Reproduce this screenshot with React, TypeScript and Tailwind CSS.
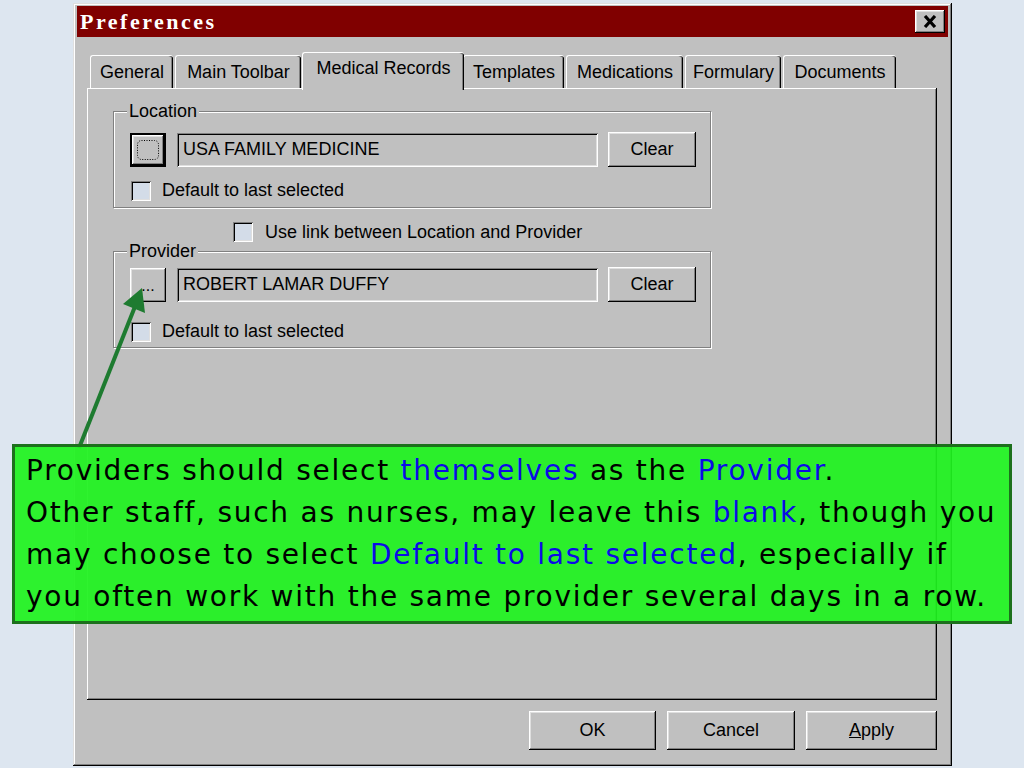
import { Fragment } from 'react';

const raised =
  'bg-[#c0c0c0] shadow-[inset_-1px_-1px_0_#000,inset_1px_1px_0_#fff,inset_-2px_-2px_0_#808080,inset_2px_2px_0_#dfdfdf]';
const sunken =
  'shadow-[inset_1px_1px_0_#808080,inset_-1px_-1px_0_#fff,inset_2px_2px_0_#000,inset_-2px_-2px_0_#dfdfdf]';

const tabs = [
  { label: 'General', w: 'w-[83px]' },
  { label: 'Main Toolbar', w: 'w-[126px]' },
  { label: 'Medical Records', w: 'w-[162px]', active: true },
  { label: 'Templates', w: 'w-[101px]' },
  { label: 'Medications', w: 'w-[117px]' },
  { label: 'Formulary', w: 'w-[96px]' },
  { label: 'Documents', w: 'w-[113px]' },
];

function Checkbox() {
  return <div className={`w-[20px] h-[20px] bg-[#d3dce8] ${sunken}`} />;
}

function Field({ value }: { value: string }) {
  return (
    <div className={`w-[421px] h-[34px] flex items-center pl-[6px] bg-[#c0c0c0] ${sunken}`}>
      {value}
    </div>
  );
}

function ClearButton() {
  return (
    <div className={`w-[88px] h-[35px] flex items-center justify-center ml-[10px] ${raised}`}>Clear</div>
  );
}

function GroupBox({ title, children }: { title: string; children: React.ReactNode }) {
  return (
    <div className="relative w-[598px] h-[97px] border border-[#808080] shadow-[1px_1px_0_#fff,inset_1px_1px_0_#fff] pl-[16px] pt-[20px]">
      <span className="absolute left-[13px] top-[-11px] px-[2px] leading-[20px] bg-[#c0c0c0]">{title}</span>
      {children}
    </div>
  );
}

const callout: [string, boolean][][] = [
  [['Providers should select ', false], ['themselves', true], [' as the ', false], ['Provider', true], ['.', false]],
  [['Other staff, such as nurses, may leave this ', false], ['blank', true], [', though you', false]],
  [['may choose to select ', false], ['Default to last selected', true], [', especially if', false]],
  [['you often work with the same provider several days in a row.', false]],
];

export default function App() {
  return (
    <div className="relative w-[1024px] h-[768px] overflow-hidden bg-[#dde6f0] font-['Liberation_Sans',Arial,sans-serif] text-[18px] text-black pt-[3px]">
      {/* dialog */}
      <div className="ml-[73px] w-[879px] h-[763px] bg-[#c0c0c0] shadow-[inset_-1px_-1px_0_#000,inset_1px_1px_0_#dfdfdf,inset_-2px_-2px_0_#808080,inset_2px_2px_0_#fff] px-[4px] pt-[3px] flex flex-col">
        <div className="h-[31px] bg-[#800000] flex items-center justify-between pl-[3px] pr-[3px]">
          <span className="font-['Liberation_Serif',serif] font-bold text-white text-[22px] tracking-[2.5px]">Preferences</span>
          <div className={`w-[30px] h-[23px] flex items-center justify-center ${raised}`}>
            <svg width="14" height="13" viewBox="0 0 14 13">
              <path d="M2 1 L12 12 M12 1 L2 12" stroke="#000" strokeWidth="3.2" />
            </svg>
          </div>
        </div>

        {/* tabs */}
        <div className="ml-[10px] mt-[15px] w-[850px]">
          <div className="flex items-start h-[36px] pl-[3px]">
            {tabs.map(t =>
              t.active ? (
                <div
                  key={t.label}
                  className={`${t.w} relative z-10 h-[38px] -mx-[1px] bg-[#c0c0c0] rounded-t-[3px] border-t border-l border-white shadow-[inset_-1px_0_0_#000,inset_-2px_0_0_#808080] flex items-center justify-center pb-[6px]`}
                >
                  {t.label}
                </div>
              ) : (
                <div
                  key={t.label}
                  className={`${t.w} mt-[3px] h-[33px] rounded-t-[3px] border-t border-l border-white shadow-[inset_-1px_0_0_#000,inset_-2px_0_0_#808080] flex items-center justify-center mr-[2px]`}
                >
                  {t.label}
                </div>
              )
            )}
          </div>
          <div className="w-[850px] h-[612px] shadow-[inset_-1px_-1px_0_#000,inset_1px_1px_0_#fff,inset_-2px_-2px_0_#808080] pl-[26px] pt-[23px]">
            <GroupBox title="Location">
              <div className="flex items-center">
                <div className={`w-[36px] h-[34px] flex items-center justify-center mr-[11px] border-2 border-black ${raised}`}>
                  <svg width="24" height="22" viewBox="0 0 24 22">
                    <rect x="1.5" y="1.5" width="21" height="19" rx="4" fill="none" stroke="#000" strokeWidth="1" strokeDasharray="1 1.5" />
                  </svg>
                </div>
                <Field value="USA FAMILY MEDICINE" />
                <ClearButton />
              </div>
              <div className="flex items-center mt-[10px] ml-[1px] gap-[11px]">
                <Checkbox />
                <span>Default to last selected</span>
              </div>
            </GroupBox>

            <div className="flex items-center mt-[14px] ml-[120px] gap-[12px] h-[20px]">
              <Checkbox />
              <span>Use link between Location and Provider</span>
            </div>

            <div className="mt-[9px]">
              <GroupBox title="Provider">
                <div className="flex items-center -mt-[5px]">
                  <div className={`w-[36px] h-[34px] flex items-end justify-center pb-[8px] mr-[11px] leading-none text-[16px] ${raised}`}>...</div>
                  <Field value="ROBERT LAMAR DUFFY" />
                  <ClearButton />
                </div>
                <div className="flex items-center mt-[16px] ml-[1px] gap-[11px]">
                  <Checkbox />
                  <span>Default to last selected</span>
                </div>
              </GroupBox>
            </div>
          </div>

          <div className="flex justify-end gap-[11px] mt-[11px]">
            <div className={`w-[127px] h-[39px] flex items-center justify-center ${raised}`}>OK</div>
            <div className={`w-[128px] h-[39px] flex items-center justify-center ${raised}`}>Cancel</div>
            <div className={`w-[131px] h-[39px] flex items-center justify-center ${raised}`}>
              <span><span className="underline">A</span>pply</span>
            </div>
          </div>
        </div>
      </div>

      {/* arrow */}
      <svg className="absolute inset-0 pointer-events-none" width="1024" height="768" viewBox="0 0 1024 768">
        <line x1="79" y1="448" x2="136" y2="304" stroke="#1e7b30" strokeWidth="4" />
        <polygon points="142,288 145,313 123,304" fill="#1e7b30" />
      </svg>

      {/* callout */}
      <div className="absolute left-[12px] top-[444px] w-[1000px] h-[180px] border-[3px] border-[#1c701c] bg-[#1ff21f]/[0.93] pl-[11px] pt-[3px] font-['Comic_Sans_MS','DejaVu_Sans',sans-serif] text-[28px] tracking-[1.75px] leading-[42px] whitespace-nowrap">
        {callout.map((line, i) => (
          <div key={i}>
            {line.map(([txt, blue], j) => (
              <Fragment key={j}>
                <span className={blue ? 'text-[#0b0be6]' : 'text-black'}>{txt}</span>
              </Fragment>
            ))}
          </div>
        ))}
      </div>
    </div>
  );
}
